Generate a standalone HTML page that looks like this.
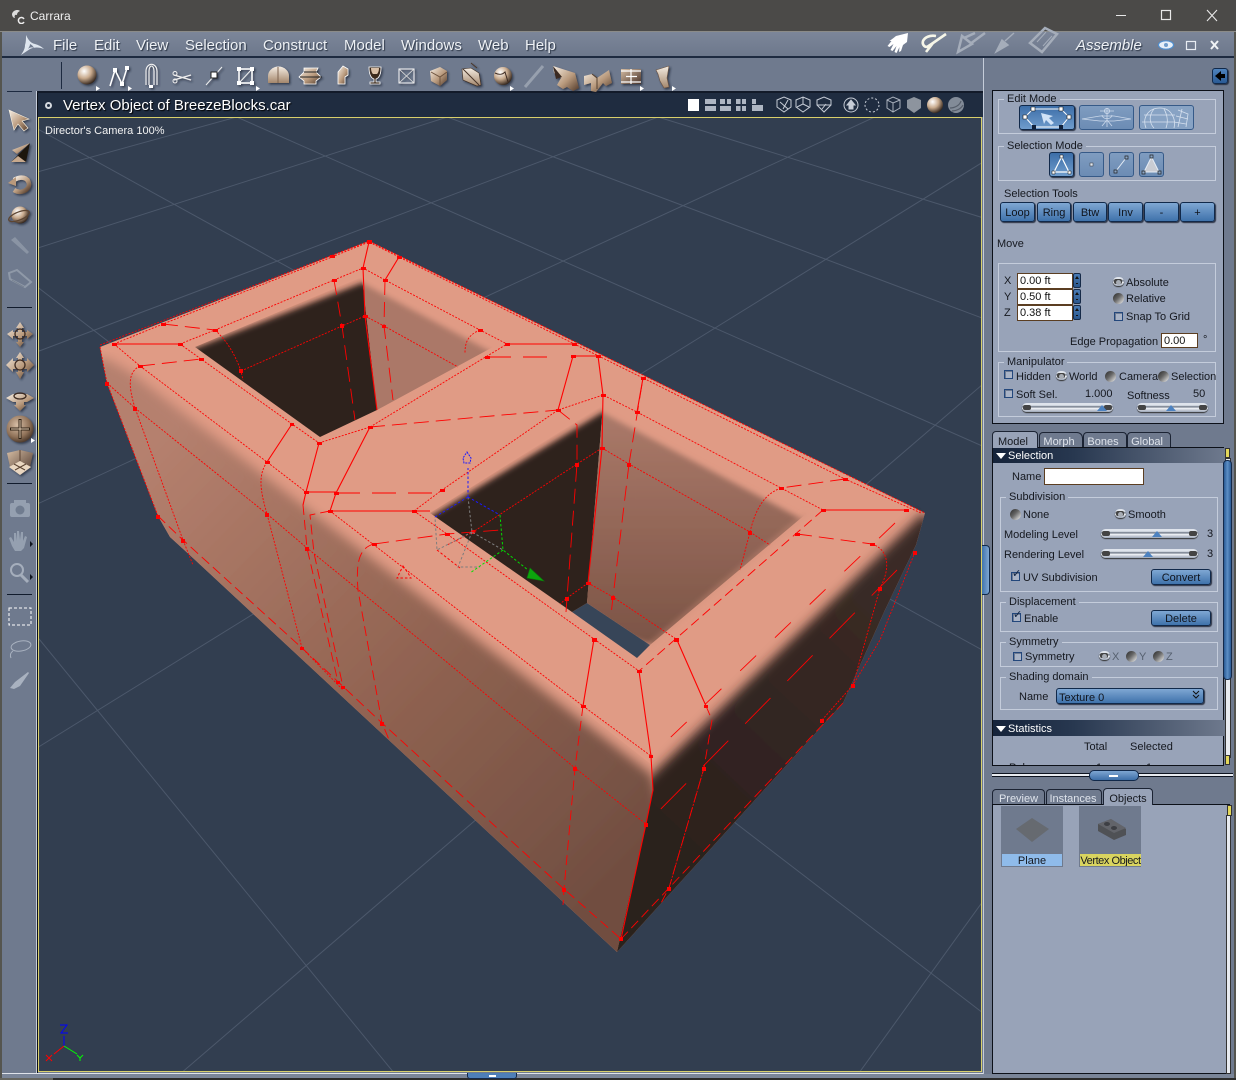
<!DOCTYPE html>
<html><head><meta charset="utf-8"><title>Carrara</title>
<style>
html,body{margin:0;padding:0;width:1236px;height:1080px;overflow:hidden;background:#6f7a8e}
*{box-sizing:border-box}
.a{position:absolute}
.t{position:absolute;margin-top:1px;font:11px/14px "Liberation Sans",sans-serif;color:#15181f;white-space:nowrap}
.m{position:absolute;top:37px;font:15px/18px "Liberation Sans",sans-serif;color:#eef1f5;text-shadow:1px 1px 1px #2a3444;white-space:nowrap}
.g{position:absolute;border:1px solid #c4ccdb}
.l{position:absolute;margin-top:1px;font:11px/12px "Liberation Sans",sans-serif;color:#15181f;background:#98a3b8;padding:0 3px;white-space:nowrap}
.b{position:absolute;padding-top:1px;background:linear-gradient(#7fa7d3,#3f72ab);border:1px solid #11294a;border-radius:3px;box-shadow:1px 1px 1px #2a3142;font:11px/16px "Liberation Sans",sans-serif;color:#10151e;text-align:center}
.b svg{margin-top:-1px}
.r{position:absolute;width:11px;height:11px;border-radius:50%;background:linear-gradient(135deg,#2a2a2a,#666 45%,#f4f4f4)}
.r.s:after{content:"";position:absolute;left:3px;top:3px;width:5px;height:5px;border-radius:50%;background:#a8adb5}
.c{position:absolute;width:9px;height:9px;border:1px solid #23477c;background:#a9b3c6;box-shadow:inset 1px 1px 0 #6e7b92}
.c.k:after{content:"✓";position:absolute;left:0;top:-5px;font:bold 11px/12px "DejaVu Sans",sans-serif;color:#10233f}
.i{position:absolute;background:#fff;border:1px solid #5b3e22;font:11px/15px "Liberation Sans",sans-serif;color:#111;padding-left:2px;white-space:nowrap;overflow:hidden}
.s{position:absolute;height:9px;border-radius:5px;background:linear-gradient(#dfe4ec 0 25%,#5e6878 45%,#f6f8fb 55%,#9ca6b7 100%);box-shadow:0 1px 1px #333}
.s:before,.s:after{content:"";position:absolute;top:2px;width:8px;height:5px;background:#444;border-radius:2px}
.s:before{left:1px}.s:after{right:1px}
.h{position:absolute;top:2px;width:0;height:0;border-left:5px solid transparent;border-right:5px solid transparent;border-bottom:6px solid #4d82c0;z-index:1}
.tab{position:absolute;background:#6f7a8e;border:1px solid #1b2333;border-bottom:0;border-radius:4px 4px 0 0;font:11px/18px "Liberation Sans",sans-serif;color:#dfe4ec;text-align:center;padding-right:4px}
.tab.on{background:#98a3b8;color:#15181f;line-height:20px}
.e{position:absolute;border:1px solid #365a88;border-radius:3px;background:linear-gradient(#7f9cc0,#6c8cb4)}
.sp{position:absolute;width:8px;height:15px;background:linear-gradient(#4a7bb5,#2a568c);border:1px solid #162a48;border-radius:2px}
.sp:after{content:"";position:absolute;left:1px;top:2px;width:0;height:0;border-left:2px solid transparent;border-right:2px solid transparent;border-bottom:3px solid #111;box-shadow:0 6px 0 -1px #111}
</style></head><body>

<div class="a" style="left:0;top:0;width:1236px;height:31px;background:#4b4a48"></div>
<div class="a" style="left:0;top:31px;width:1236px;height:1px;background:#8b8b88"></div>
<div class="a" style="left:0;top:32px;width:2px;height:1048px;background:#55554f"></div>
<div class="a" style="right:0;top:32px;width:2px;height:1048px;background:#55554f"></div>
<div class="t" style="left:30px;top:8px;font-size:12px;color:#f0f0f0">Carrara</div>
<svg class="a" style="left:10px;top:8px" width="16" height="16" viewBox="0 0 16 16"><path d="M2 6C3 2 8 1 10 3 8 4 7 5 7 7 5 6 4 8 5 10 3 10 2 8 2 6z" fill="#ddd"/><path d="M14 11a3 3 0 1 0 0 3" fill="none" stroke="#eee" stroke-width="1.5"/></svg>
<svg class="a" style="left:1110px;top:8px" width="116" height="16"><path d="M6 7.5h10" stroke="#e8e8e8"/><rect x="51.5" y="2.5" width="9" height="9" fill="none" stroke="#e8e8e8" stroke-width="1.2"/><path d="M97 2l10 11M107 2L97 13" stroke="#e8e8e8" stroke-width="1.1"/></svg>

<!-- menu -->
<div class="a" style="left:2px;top:32px;width:1232px;height:24px;background:linear-gradient(#7c8699,#6d788c)"></div>
<div class="a" style="left:2px;top:56px;width:1232px;height:2px;background:#1d2a40"></div>
<div class="a" style="left:2px;top:58px;width:1232px;height:33px;background:#6f7a8e"></div>
<div class="m" style="left:53px">File</div><div class="m" style="left:94px">Edit</div><div class="m" style="left:136px">View</div><div class="m" style="left:185px">Selection</div><div class="m" style="left:263px">Construct</div><div class="m" style="left:344px">Model</div><div class="m" style="left:401px">Windows</div><div class="m" style="left:478px">Web</div><div class="m" style="left:525px">Help</div>
<div class="m" style="left:1076px;font-style:italic">Assemble</div>
<div class="a" style="left:61px;top:62px;width:1px;height:27px;background:#1d2a40"></div>
<div class="a" style="left:983px;top:58px;width:1px;height:1020px;background:#c5ccd9"></div>
<div class="a" style="left:7px;top:91px;width:25px;height:1px;background:#1d2a40"></div>

<!-- left rail edges -->
<div class="a" style="left:36px;top:91px;width:1px;height:982px;background:#c5ccd9"></div>

<!-- viewport -->
<div class="a" style="left:37px;top:91px;width:946px;height:2px;background:#121a29"></div>
<div class="a" style="left:37px;top:93px;width:946px;height:24px;background:#1f2c40"></div>
<div class="a" style="left:37px;top:93px;width:1px;height:980px;background:#0c1018"></div>
<div class="a" style="left:45px;top:102px;width:7px;height:7px;border:2px solid #d5d9df;border-radius:50%"></div>
<div class="t" style="left:63px;top:96px;font-size:15px;line-height:18px;color:#fff;text-shadow:1px 1px 1px #000">Vertex Object of BreezeBlocks.car</div>

<svg class="a" style="left:0;top:0" width="1236" height="1080" viewBox="0 0 1236 1080">
<defs>
<linearGradient id="fw" gradientUnits="userSpaceOnUse" x1="160" y1="440" x2="610" y2="880"><stop offset="0" stop-color="#b5806e"/><stop offset=".5" stop-color="#936553"/><stop offset="1" stop-color="#714e41"/></linearGradient>
<linearGradient id="rw" gradientUnits="userSpaceOnUse" x1="903" y1="560" x2="640" y2="840"><stop offset="0" stop-color="#3b2b26"/><stop offset="1" stop-color="#2b201d"/></linearGradient>
<linearGradient id="w2" gradientUnits="userSpaceOnUse" x1="650" y1="420" x2="650" y2="650"><stop offset="0" stop-color="#a97868"/><stop offset="1" stop-color="#7a5345"/></linearGradient>
<filter id="b5" x="-20%" y="-20%" width="140%" height="140%"><feGaussianBlur stdDeviation="5.5"/></filter>
<filter id="b3" x="-20%" y="-20%" width="140%" height="140%"><feGaussianBlur stdDeviation="3"/></filter>
<clipPath id="cF"><path d="M100 350L107 383 158 516 170 537 193 558 617 952 646 824 653 790 652 765 130 355z"/></clipPath>
<clipPath id="cR"><path d="M925 513L916 545 885 610 843 703 617 952 646 824 653 790 652 745 905 490z"/></clipPath>
<clipPath id="dW1"><path d="M195 347L362 277 377 410 320 437z"/></clipPath>
<clipPath id="rW1"><path d="M362 277L493 347 377 410z"/></clipPath>
<clipPath id="dW2"><path d="M430 513L603 405 587 603 572 612z"/></clipPath>
<clipPath id="rW2"><path d="M603 405L807 513 650 645 587 603z"/></clipPath>
<clipPath id="cVP"><rect x="39" y="118" width="942" height="953"/></clipPath>
</defs>
<rect x="38.5" y="117.5" width="943" height="954" fill="#323e50" stroke="#d8cf6a"/>
<g clip-path="url(#cVP)"><g transform="translate(38 117) scale(.602 .609)" stroke="#4c586b" fill="none">
<path vector-effect="non-scaling-stroke" d="M0 215L680 0M0 90L330 0M1030 0L0 385M1390 0L0 635M1568 75L0 1035M1568 440L240 1568M1568 1290L1365 1568M330 0L1568 540M1030 0L1568 165M680 0L1568 330M0 20L1568 875M0 280L1568 1470M0 855L590 1568"/>
</g></g>
<!-- body -->
<path d="M100 347L369 241 925 513 916 545 885 610 843 703 617 952 193 558 170 537 158 516 107 383z" fill="#e09b85"/>
<g clip-path="url(#cF)"><path d="M60 370L105 358 130 372 652 775 720 1010 100 800z" fill="url(#fw)" filter="url(#b5)"/></g>
<g clip-path="url(#cR)"><path d="M652 775L923 513 975 560 640 1010 550 1000 590 835z" fill="url(#rw)" filter="url(#b5)"/></g>
<!-- hole 1 -->
<path d="M195 347L362 277 493 347 320 437z" fill="#e09b85"/>
<g clip-path="url(#dW1)"><path d="M170 358L362 283 420 300 400 450 300 460z" fill="#2e211f" filter="url(#b3)"/></g>
<g clip-path="url(#rW1)"><path d="M340 270L362 283 493 353 400 430 340 420z" fill="#ab7867" filter="url(#b3)"/></g>
<!-- hole 2 -->
<path d="M430 513L603 405 807 513 637 658 572 612z" fill="#e09b85"/>
<path d="M587 603L650 645 637 658 572 612z" fill="#374558"/>
<g clip-path="url(#dW2)"><path d="M400 535L603 412 650 420 620 640 540 640z" fill="#2d201d" filter="url(#b3)"/></g>
<g clip-path="url(#rW2)"><path d="M570 395L603 413 807 522 700 660 570 620z" fill="url(#w2)" filter="url(#b3)"/></g>
<path d="M807 513L650 645" stroke="#d0917c" stroke-width="2" filter="url(#b3)"/>
<!-- wire: solid -->
<g fill="none" stroke="#f00" stroke-width="1.1">
<path d="M114 344H180M363 268L369 242M363 268L365 316 377 410M399 257L385 280M507 344H574M573 356H598M573 356L558 410M598 356L603 395M643 378L637 412M603 395L602 448 588 583M292 424L267 462M319 443L306 492 303 505M370 427L336 493 330 511M306 492H336M330 511H430M594 639L583 706M639 671L651 756 653 790 646 824 621 939M677 640L706 706M823 510H906"/>
</g>
<!-- wire: dotted -->
<g fill="none" stroke="#f00" stroke-width=".9" stroke-dasharray="2 1.4">
<path d="M100 345L369 241 925 513M114 344L163 324 332 257 369 242 399 257 643 378 845 479 921 513M180 344L215 330 334 280 363 268 385 280 480 330 507 344M241 371L342 326 365 316 384 326 458 367M215 330C226 340 234 352 241 371L243 380M480 330C468 335 465 342 465 353M370 427L507 344M319 443L370 427M114 344L140 366 267 462 306 492M180 344L292 424 319 443M330 511L497 640 583 706 651 756M414 511L447 534 594 639 639 671M107 383L135 408 267 514 307 548 420 640 575 768 646 824M414 511L442 490 558 410 603 395 637 412 781 488 823 510M602 448L629 464 750 532 770 545M602 448L577 464 473 532 447 545M588 583L613 597 676 639M588 583L567 598 560 604M100 347L107 383 158 516M140 366C128 372 128 385 135 408L183 540 193 565M267 462C258 475 260 490 267 514L302 648 343 690M781 488C762 495 755 512 750 532L740 570M872 544C890 550 890 570 880 588L853 685 822 720M915 552L880 640 853 685M704 768L669 888"/>
</g>
<!-- wire: dashed -->
<g fill="none" stroke="#f00" stroke-width=".9">
<path stroke-dasharray="15 7" d="M163 324L215 330M140 366L201 359M385 280L384 326 393 400M334 280L342 326 355 420M370 427L558 410M558 410L577 425 577 464 567 598 566 612M629 464L643 378M629 464L613 597 611 615M845 479L781 488M797 534L872 544M374 544L447 534 500 530"/>
<path stroke-dasharray="24 12" stroke-width="1.1" d="M336 493H442M487 357H550"/>
<path stroke-dasharray="10 5" d="M158 516L183 540 302 648 382 723 564 889 621 939M303 505L307 548 338 682M330 511L310 515 314 553 343 687M374 544C358 548 356 565 358 590L382 723 390 742M706 706L712 720 704 768 669 888 660 905M583 706L575 768 564 889 563 905M823 510L639 671M621 939L843 703"/>
<path stroke-dasharray="22 26" d="M895 523L651 756"/>
<path stroke-dasharray="36 24" d="M897 570L646 824"/>
</g>
<!-- vertices -->
<path fill="#f00" d="M112 343h5v3h-5zM161 323h5v3h-5zM330 255h5v3h-5zM367 240h5v4h-5zM397 256h5v3h-5zM178 343h5v3h-5zM213 329h5v3h-5zM332 279h5v3h-5zM361 267h5v3h-5zM383 279h5v3h-5zM239 369h4v4h-4zM340 324h4v4h-4zM363 315h5v3h-5zM382 325h4v3h-4zM478 329h5v3h-5zM505 343h5v3h-5zM572 343h5v3h-5zM571 355h5v3h-5zM596 355h5v3h-5zM485 356h5v3h-5zM641 377h5v3h-5zM601 394h5v3h-5zM635 411h5v3h-5zM556 409h5v3h-5zM600 447h5v3h-5zM627 463h4v4h-4zM575 463h4v4h-4zM586 582h5v3h-5zM611 596h4v4h-4zM565 597h4v4h-4zM592 638h5v4h-5zM674 638h5v4h-5zM637 670h5v3h-5zM779 487h5v3h-5zM843 478h5v3h-5zM821 509h5v3h-5zM904 509h5v3h-5zM795 533h5v3h-5zM870 543h5v3h-5zM748 531h4v4h-4zM878 587h4v4h-4zM913 551h4v4h-4zM851 684h4v4h-4zM440 489h5v3h-5zM445 533h5v3h-5zM471 530h4v4h-4zM581 705h5v3h-5zM573 767h4v4h-4zM562 888h4v4h-4zM619 937h4v4h-4zM649 755h4v3h-4zM644 823h4v4h-4zM704 705h4v3h-4zM702 767h4v4h-4zM667 887h4v4h-4zM820 719h4v4h-4zM380 722h4v4h-4zM336 681h4v3h-4zM341 686h4v3h-4zM300 647h4v3h-4zM138 365h5v3h-5zM199 358h5v3h-5zM105 382h4v4h-4zM133 407h4v4h-4zM156 515h4v4h-4zM181 539h4v4h-4zM265 461h5v3h-5zM290 423h4v3h-4zM317 442h5v3h-5zM368 426h5v3h-5zM304 491h5v3h-5zM334 492h5v3h-5zM328 510h5v3h-5zM412 510h5v3h-5zM372 543h5v3h-5zM265 513h4v4h-4zM305 547h4v4h-4z"/>
<!-- gizmo -->
<g fill="none" stroke-width="1" stroke-dasharray="2.500 2">
<path stroke="#7d7d7d" d="M468 497L472 532 503 550M472 532L437 550 435 517M472 532L458 567H480"/>
<path stroke="#1a1aff" d="M468 497V468M468 497L500 515M468 497L435 517"/>
<path stroke="#00e000" d="M500 515L503 550 528 570M503 550L470 573"/>
<path stroke="#f00" d="M437 550L460 568M403 566l5 7 3 5h-14z"/>
</g>
<path d="M467 452l4 6-1 5-6 0-1-5z" fill="none" stroke="#1a1aff" stroke-width="1" stroke-dasharray="2 1"/>
<path d="M530 568l14 13-17-3z" fill="#0da50d" stroke="#0a7a0a" stroke-width=".6"/>
<!-- axis -->
<g fill="none" stroke-width="1">
<path stroke="#00f" d="M64 1046V1036M60 1025h7l-6 8h7"/>
<path stroke="#f00" d="M64 1046L54 1054M46 1055l6 6M52 1055l-6 6"/>
<path stroke="#0f0" d="M64 1046L77 1054M77 1055l3 3 3-3M80 1058v3"/>
</g>

<!-- toolbar icons -->
<defs>
<radialGradient id="sph" cx=".35" cy=".3" r=".75"><stop offset="0" stop-color="#fff"/><stop offset=".5" stop-color="#c9ab8e"/><stop offset="1" stop-color="#2d2018"/></radialGradient>
<radialGradient id="sph2" cx=".4" cy=".35" r=".75"><stop offset="0" stop-color="#d8bfa6"/><stop offset=".6" stop-color="#8f7158"/><stop offset="1" stop-color="#33251b"/></radialGradient>
<linearGradient id="tan" x1="0" y1="0" x2="1" y2="1"><stop offset="0" stop-color="#f7efe5"/><stop offset=".55" stop-color="#b99a7d"/><stop offset="1" stop-color="#50392a"/></linearGradient>
<linearGradient id="dk" x1="0" y1="0" x2="1" y2="1"><stop offset="0" stop-color="#d7bea4"/><stop offset="1" stop-color="#48332a"/></linearGradient>
<linearGradient id="ln" x1="0" y1="0" x2="0" y2="1"><stop offset="0" stop-color="#f4ece2"/><stop offset="1" stop-color="#a4876c"/></linearGradient>
<filter id="ds" x="-30%" y="-30%" width="170%" height="170%"><feDropShadow dx="1.5" dy="1.5" stdDeviation="1" flood-color="#1c2433" flood-opacity=".7"/></filter>
</defs>
<g filter="url(#ds)">
<circle cx="87" cy="75" r="9.5" fill="url(#sph)"/>
<path d="M110 86L115 70 122 84 127 68" fill="none" stroke="#fff" stroke-width="1.5"/><path d="M113 68h4v4h-4zM125 66h4v4h-4zM120 82h4v4h-4z" fill="#fff"/>
<path d="M146 85V71a4.500 5.500 0 0 1 11 0V85M149 85V71a1.500 3 0 0 1 5 0V85" fill="none" stroke="#f2f2f2" stroke-width="1.100"/><rect x="149" y="85" width="4" height="3" fill="#fff"/>
<path d="M174 75l17 5M174 80l17-5" stroke="#eee" stroke-width="1.400"/><circle cx="175" cy="73.500" r="2" fill="none" stroke="#eee"/><circle cx="175" cy="81" r="2" fill="none" stroke="#eee"/>
<path d="M206 85L222 67" stroke="#eee"/><rect x="211" y="72" width="6" height="6" fill="#fff" stroke="#222"/>
<rect x="239" y="69" width="13" height="14" fill="none" stroke="#fff" stroke-width="1.500"/><path d="M239 83L252 69" stroke="#eee"/><path d="M237 67h4v4h-4zM250 67h4v4h-4zM237 81h4v4h-4zM250 81h4v4h-4z" fill="#fff"/>
<path d="M268 83V76a10 9 0 0 1 21 0V83z" fill="url(#ln)"/><path d="M278 67v16" stroke="#7d6450"/>
<path d="M304 68h14l-2 4 5 5-5 4v3h-12v-3l-5-4 5-5z" fill="url(#tan)" stroke="#fff" stroke-width=".8"/><path d="M300 77h22M304 72h14" stroke="#222" stroke-width="1"/>
<path d="M338 84V72l5-6 5 3v6l-3 2v7z" fill="url(#tan)" stroke="#fff" stroke-width=".8"/>
<path d="M369 67h12c0 8-2 11-5 12v3h4v2h-10v-2h4v-3c-3-1-5-4-5-12z" fill="#3b2a1f" stroke="#fff" stroke-width=".8"/><path d="M371 68h8c0 3-1 5-2 6h-4c-1-1-2-3-2-6z" fill="#d8bfa6"/>
<rect x="399" y="69" width="15" height="14" fill="none" stroke="#fff"/><path d="M399 69l15 14M414 69L399 83" stroke="#ddd" stroke-width=".8"/>
<path d="M430 71l10-4 7 4v9l-7 6-9-5z" fill="url(#tan)"/><path d="M431 72l9 5 7-5M440 77v9" fill="none" stroke="#6d523e"/>
<path d="M462 69l9-1 8 5 2 12-4 1-14-6z" fill="url(#ln)" stroke="#3f2e22" stroke-width=".6"/><path d="M463 69l16 16M471 63l6 5" stroke="#4a3629" fill="none"/>
<circle cx="503" cy="76" r="9" fill="url(#sph)"/><path d="M495 73c4 2 7 2 10-1l3 10" stroke="#3d2b20" fill="none"/>
</g>
<path d="M525 87L543 66" stroke="#97a0ae" stroke-width="3"/>
<g filter="url(#ds)">
<path d="M553 66l22 7 4 15-6 3-6-4-4 2-6-4 4-7-7-5z" fill="url(#tan)"/><path d="M553 66l9 11-6 2z" fill="#3a2a20"/>
<path d="M584 76l8-2 5 4 12-8 3 13-6 3-3-3-7 9-5-1v-8l-7 2z" fill="url(#tan)"/><path d="M592 74l5 4v11" stroke="#54402f" fill="none"/>
<rect x="621" y="69" width="20" height="15" fill="url(#dk)"/><path d="M621 71h20M621 82h20M626 76.500h11M631 69v15" stroke="#fff" stroke-width="1.200" fill="none"/>
<path d="M656 70l13-4-2 12 2 9-5 1-4-7-2-7z" fill="url(#ln)" stroke="#6c5443" stroke-width=".6"/>
</g>
<g fill="#fff"><path d="M96 86l4 2.500-4 2.500zM128 86l4 2.500-4 2.500zM256 86l4 2.500-4 2.500zM510 86l4 2.500-4 2.500zM640 86l4 2.500-4 2.500zM672 86l4 2.500-4 2.500z"/></g>
<!-- top right icons -->
<path d="M896 36l12-3-1 9-4 3-2 6-2 1 .500-5-3 6-2-1 2-6-4 5-2-1 3-6-4 3-2-1 4-5-2 0 4-3z" fill="#fff"/>
<path d="M936 36c-6-1-11 1-13 5-1 3 1 6 4 6l6-4 13-9M926 52l4-5 3-4" fill="none" stroke="#f6f6e8" stroke-width="2.600"/>
<path d="M958 52L962 36 972 44zM970 44l15-11M964 38l11-5" fill="none" stroke="#a5adba" stroke-width="2.500"/>
<path d="M996 52l6-12 6 5zM1005 41l9-8" fill="#a5adba" stroke="#a5adba" stroke-width="1.500"/>
<path d="M1030 43l12 9 15-18-12-6z" fill="none" stroke="#a5adba" stroke-width="2.500"/><path d="M1037 42l9-10M1043 46l9-10" stroke="#a5adba" stroke-width="1"/>
<ellipse cx="1166" cy="45" rx="7.500" ry="4.200" fill="#e6eff9" stroke="#4f8fd0" stroke-width="1.200"/><circle cx="1166" cy="45" r="2" fill="#6f9ccc"/>
<rect x="1186.500" y="41.500" width="9" height="8" fill="none" stroke="#e8ecf2" stroke-width="1.200"/>
<path d="M1211 41l7 8M1218 41l-7 8" stroke="#f0f3f6" stroke-width="2"/>
<!-- view icons -->
<rect x="688" y="99" width="11" height="12" fill="#fff"/><path fill="#aeb6c3" d="M705 99h11v5h-11zM705 106h11v5h-11zM720 99h5v5h-5zM727 99h4v5h-4zM720 106h11v5h-11zM736 99h4.500v5h-4.500zM742 99h4v5h-4zM736 106h4.500v5h-4.500zM742 106h4v5h-4zM752 99h4v5h-4zM752 105h11v6h-11z"/>
<g fill="none" stroke="#c6ccd6" stroke-width="1"><path d="M777 100l7-3 7 3v7l-7 5-7-5zM780 102l8 7M788 100l-5 9"/><path d="M796 100l7-3 7 3v7l-7 5-7-5zM803 97v7l-6 3M803 104l6 3"/><path d="M817 100l7-3 7 3v5l-7 7-7-7zM817 105l14 0M822 109l4-5"/><circle cx="851" cy="105" r="7"/><path d="M851 100l4 5h-2v4h-4v-4h-2z" fill="#c6ccd6"/><circle cx="872" cy="105" r="7" stroke-dasharray="2 2"/><path d="M887 100l6-3 7 3v8l-7 4-6-4zM887 100l6 3 7-3M893 103v9" stroke="#aab1bd"/></g>
<path d="M907 100l7-3 7 3v8l-7 5-7-5z" fill="#8d949e"/>
<ellipse cx="935" cy="105" rx="8" ry="8" fill="url(#sph)"/>
<circle cx="956" cy="105" r="8" fill="#828b98"/><path d="M950 108c5 0 10-3 11-7M952 111c4 0 9-2 11-6" stroke="#555d6a" stroke-width="1.200" fill="none"/>

<!-- left tools -->
<g filter="url(#ds)">
<path d="M9 110l20 9-7 2 6 7-4 3-6-7-4 6z" fill="url(#tan)" stroke="#f8f0e0" stroke-width=".6"/>
<path d="M11 162l19-19-4 19-7-1z" fill="#1a1410"/><path d="M30 143l-18 7 5 4z" fill="url(#tan)"/><path d="M18 156l-7 6 15 0z" fill="#c7a98d"/>
<path d="M14 180c7-4 14-3 15 4 0 7-9 10-15 6" fill="none" stroke="url(#tan)" stroke-width="4.500"/><path d="M8 183l8-6 0 9z" fill="#b9997c"/>
<circle cx="20" cy="215" r="8.500" fill="url(#sph)"/><ellipse cx="19" cy="216" rx="11" ry="4" fill="none" stroke="#5b4433" stroke-width="1.300" transform="rotate(-22 19 216)"/>
<path d="M20 322l4 6h-2v4h5v-2l6 4-6 5v-3h-5v6h2l-4 5-4-5h2v-6h-5v3l-6-5 6-4v2h5v-4h-2z" fill="url(#tan)"/><circle cx="20" cy="334" r="5" fill="none" stroke="#3d2c20" stroke-width="1.300"/>
<path d="M20 352l4 6h-2v3h5v-3l7 7-7 7v-3h-5v3h2l-4 7-4-7h2v-3h-5v3l-7-7 7-7v3h5v-3h-2z" fill="url(#tan)"/><circle cx="20" cy="365" r="5" fill="none" stroke="#3d2c20" stroke-width="1.300"/>
<path d="M6 398l7-4h14l7 4-7 4h-3v3h2l-6 6-6-6h2v-3h-3z" fill="url(#tan)"/><ellipse cx="20" cy="396" rx="6" ry="3" fill="none" stroke="#3d2c20" stroke-width="1.300"/>
<circle cx="20" cy="429" r="13.500" fill="url(#sph2)"/><path d="M20 419v20M10 429h20" stroke="#2e2018" stroke-width="3"/><path d="M20 420v18M11 429h18" stroke="#e4ccb3" stroke-width="1"/>
<path d="M7 453l13-3 13 3-3 14-10 8-10-8z" fill="url(#dk)"/><path d="M9 467l11-6 11 6-11 8z" fill="#ead7c1"/><path d="M20 450v11M14 464l11 6M26 464l-11 6" stroke="#5a4332"/>
</g>
<g fill="#95a0b0">
<rect x="10" y="503" width="20" height="14" rx="2"/><rect x="14" y="500" width="12" height="4"/><circle cx="20" cy="510" r="4.500" fill="#707c8f"/>
<path d="M12 546l-3-8 2-1 3 5V533h2l1 8V531h2l1 9 1-8h2l0 9 2-5 2 1-3 11-3 3h-6z"/>
</g>
<circle cx="17" cy="570" r="6" fill="none" stroke="#a5aebc" stroke-width="2"/><path d="M21 575l7 7" stroke="#a5aebc" stroke-width="3"/>
<path d="M30 541l3 3-3 3zM30 574l3 3-3 3z" fill="#10151f"/>
<path d="M31 438l4 2.500-4 2.500z" fill="#fff"/>
<path d="M11 240l4-3 14 15-2 2z" fill="#8a94a4"/>
<path d="M9 273l8-3 14 12-6 5-15-8z" fill="none" stroke="#8f99a8" stroke-width="2"/><path d="M12 280l12 7" stroke="#77818f"/>
<rect x="9" y="608" width="22" height="17" fill="none" stroke="#fff" stroke-dasharray="3 2"/>
<ellipse cx="21" cy="646" rx="10" ry="5" fill="none" stroke="#a9b2c0" stroke-width="1" transform="rotate(-10 21 646)"/><path d="M13 651c-3 2-3 5-2 7" stroke="#a9b2c0" fill="none"/>
<path d="M10 688l5-6 13-10 1 1-9 13-6 3z" fill="#a9b2c0"/>
</svg>
<div class="a" style="left:7px;top:307px;width:25px;height:1px;background:#111b2c"></div>
<div class="a" style="left:7px;top:483px;width:25px;height:1px;background:#111b2c"></div>
<div class="a" style="left:7px;top:594px;width:25px;height:1px;background:#111b2c"></div>
<div class="t" style="left:45px;top:123px;color:#f2f2f2">Director's Camera 100%</div>

<!-- bottom strip -->
<div class="a" style="left:2px;top:1073px;width:981px;height:1px;background:#dfe3ea"></div>
<div class="a" style="left:2px;top:1074px;width:1232px;height:4px;background:#7a8598"></div>
<div class="a" style="left:0;top:1078px;width:1236px;height:2px;background:#2c2c2b"></div>
<div class="a" style="left:0;top:1078px;width:53px;height:2px;background:#66665f"></div>
<div class="a" style="left:467px;top:1073px;width:50px;height:6px;background:#4e7fb8;border:1px solid #14294a;border-top:0;border-radius:0 0 3px 3px"></div>
<div class="a" style="left:489px;top:1075px;width:7px;height:2px;background:#fff"></div>

<!-- right panel -->
<div class="b" style="left:1212px;top:68px;width:16px;height:16px;background:linear-gradient(#4f83bd,#2a5a94)"><svg width="14" height="14" style="display:block"><path d="M2 7l6-5v3h4v4H8v3z" fill="#000"/></svg></div>
<div class="a" style="left:982px;top:545px;width:8px;height:50px;background:linear-gradient(90deg,#3f72ab,#7fa7d3);border:1px solid #122a4a;border-left:0;border-radius:0 4px 4px 0"></div>
<div class="a" style="left:992px;top:90px;width:232px;height:334px;background:#98a3b8;border:1px solid #0c1018"></div>

<div class="g" style="left:998px;top:99px;width:218px;height:35px"></div><div class="l" style="left:1004px;top:92px">Edit Mode</div>
<div class="b" style="left:1019px;top:105px;width:56px;height:25px;background:linear-gradient(#3d6ea8,#6f9ccc)"><svg width="54" height="23" style="display:block"><path d="M5 11L13 3H41L49 11 41 21H14z" fill="none" stroke="#fff"/><path d="M3 9h4v4H3zM11 1h4v4h-4zM39 1h4v4h-4zM47 9h4v4h-4z" fill="#fff" stroke="#111" stroke-width=".6"/><path d="M12 19h4v4h-4zM39 19h4v4h-4z" fill="#10213b"/><path d="M21 7l12 3-4 2 5 5-3 2-5-5-2 4z" fill="#cfe2f7"/></svg></div>
<div class="e" style="left:1079px;top:105px;width:55px;height:25px"><svg width="53" height="23" style="display:block"><path d="M2 13l18-3h14l17 3-17 2H20zM27 2v19M20 5h14M22 20l5-6 5 6M22 9c1 5 9 5 10 0" fill="none" stroke="#cbd8ea" stroke-width=".8"/><circle cx="27" cy="5" r="2.500" fill="none" stroke="#cbd8ea"/></svg></div>
<div class="e" style="left:1139px;top:105px;width:55px;height:25px;background:#88a3c4"><svg width="53" height="23" style="display:block"><path d="M6 22C2 12 8 2 20 2S36 14 34 22M14 3C8 10 10 18 14 22M24 3c4 7 4 14 2 19M4 9H35M2 16H35M38 4l10 4-2 13M42 3l-4 18M36 10l12 3M34 16l12 2" fill="none" stroke="#d6e1ef" stroke-width=".8"/></svg></div>

<div class="g" style="left:998px;top:146px;width:218px;height:35px"></div><div class="l" style="left:1004px;top:139px">Selection Mode</div>
<div class="b" style="left:1049px;top:152px;width:25px;height:25px;background:linear-gradient(#3d6ea8,#6f9ccc)"><svg width="23" height="23" style="display:block"><path d="M11.500 4L4 19h15z" fill="none" stroke="#fff" stroke-width="1.200"/><path d="M10 2h3v3h-3zM2 18h3v3H2zM18 18h3v3h-3z" fill="#fff" stroke="#111" stroke-width=".5"/></svg></div>
<div class="e" style="left:1079px;top:152px;width:25px;height:25px"><svg width="23" height="23" style="display:block"><rect x="10" y="10" width="3" height="3" fill="#dfe8f3" stroke="#333" stroke-width=".5"/></svg></div>
<div class="e" style="left:1109px;top:152px;width:25px;height:25px"><svg width="23" height="23" style="display:block"><path d="M6 18L16 5" stroke="#e6edf6"/><path d="M15 3h3v3h-3zM4 17h3v3H4z" fill="#8ba6c7" stroke="#222" stroke-width=".7"/></svg></div>
<div class="e" style="left:1139px;top:152px;width:25px;height:25px"><svg width="23" height="23" style="display:block"><path d="M11.500 4L4 19h15z" fill="#c9ccd3" stroke="#e6edf6"/><path d="M10 2h3v3h-3zM2 18h3v3H2zM18 18h3v3h-3z" fill="#8ba6c7" stroke="#222" stroke-width=".7"/></svg></div>

<div class="t" style="left:1004px;top:186px">Selection Tools</div>
<div class="b" style="left:1000px;top:202px;width:35px;height:20px;line-height:18px">Loop</div>
<div class="b" style="left:1037px;top:202px;width:34px;height:20px;line-height:18px">Ring</div>
<div class="b" style="left:1073px;top:202px;width:34px;height:20px;line-height:18px">Btw</div>
<div class="b" style="left:1108px;top:202px;width:35px;height:20px;line-height:18px">Inv</div>
<div class="b" style="left:1144px;top:202px;width:35px;height:20px;line-height:18px">-</div>
<div class="b" style="left:1180px;top:202px;width:35px;height:20px;line-height:18px">+</div>
<div class="t" style="left:997px;top:236px">Move</div>

<div class="g" style="left:998px;top:263px;width:218px;height:89px"></div>
<div class="t" style="left:1004px;top:273px">X</div><div class="t" style="left:1004px;top:289px">Y</div><div class="t" style="left:1004px;top:305px">Z</div>
<div class="i" style="left:1017px;top:273px;width:56px;height:16px">0.00 ft</div><div class="sp" style="left:1073px;top:273px"></div>
<div class="i" style="left:1017px;top:289px;width:56px;height:16px">0.50 ft</div><div class="sp" style="left:1073px;top:289px"></div>
<div class="i" style="left:1017px;top:305px;width:56px;height:16px">0.38 ft</div><div class="sp" style="left:1073px;top:305px"></div>
<div class="r s" style="left:1113px;top:277px"></div><div class="t" style="left:1126px;top:275px">Absolute</div>
<div class="r" style="left:1113px;top:293px"></div><div class="t" style="left:1126px;top:291px">Relative</div>
<div class="c" style="left:1114px;top:312px"></div><div class="t" style="left:1126px;top:309px">Snap To Grid</div>
<div class="t" style="left:1070px;top:334px">Edge Propagation</div>
<div class="i" style="left:1161px;top:333px;width:37px;height:15px">0.00</div>
<div class="t" style="left:1203px;top:332px">°</div>

<div class="g" style="left:998px;top:362px;width:218px;height:55px"></div><div class="l" style="left:1004px;top:355px">Manipulator</div>
<div class="c" style="left:1004px;top:370px"></div><div class="t" style="left:1016px;top:369px">Hidden</div>
<div class="r s" style="left:1056px;top:371px"></div><div class="t" style="left:1069px;top:369px">World</div>
<div class="r" style="left:1105px;top:371px"></div><div class="t" style="left:1119px;top:369px">Camera</div>
<div class="r" style="left:1158px;top:371px"></div><div class="t" style="left:1171px;top:369px">Selection</div>
<div class="c" style="left:1004px;top:389px"></div><div class="t" style="left:1016px;top:387px">Soft Sel.</div>
<div class="t" style="left:1085px;top:386px">1.000</div><div class="t" style="left:1127px;top:388px">Softness</div><div class="t" style="left:1193px;top:386px">50</div>
<div class="s" style="left:1022px;top:403px;width:91px"><i class="h" style="left:75px"></i></div>
<div class="s" style="left:1137px;top:403px;width:71px"><i class="h" style="left:29px"></i></div>

<!-- model tabs -->
<div class="tab on" style="left:992px;top:431px;width:46px;height:17px;z-index:2">Model</div>
<div class="tab" style="left:1039px;top:432px;width:44px;height:15px;border-radius:4px 6px 0 0">Morph</div>
<div class="tab" style="left:1083px;top:432px;width:44px;height:15px">Bones</div>
<div class="tab" style="left:1127px;top:432px;width:44px;height:15px">Global</div>
<div class="a" style="left:992px;top:447px;width:232px;height:319px;background:#98a3b8;border:1px solid #0c1018;overflow:hidden"></div>
<div class="a" style="left:993px;top:448px;width:232px;height:15px;background:linear-gradient(90deg,#15233a,#283850 35%,#6e798d)"></div>
<div class="a" style="left:996px;top:453px;width:0;height:0;border-left:5px solid transparent;border-right:5px solid transparent;border-top:6px solid #fff"></div>
<div class="t" style="left:1008px;top:448px;color:#fff">Selection</div>
<div class="t" style="left:1012px;top:469px">Name</div><div class="i" style="left:1044px;top:468px;width:100px;height:17px"></div>
<div class="g" style="left:1000px;top:497px;width:218px;height:95px"></div><div class="l" style="left:1006px;top:490px">Subdivision</div>
<div class="r" style="left:1010px;top:509px"></div><div class="t" style="left:1023px;top:507px">None</div>
<div class="r s" style="left:1115px;top:509px"></div><div class="t" style="left:1128px;top:507px">Smooth</div>
<div class="t" style="left:1004px;top:527px">Modeling Level</div><div class="s" style="left:1101px;top:529px;width:97px"><i class="h" style="left:51px"></i></div><div class="t" style="left:1207px;top:526px">3</div>
<div class="t" style="left:1004px;top:547px">Rendering Level</div><div class="s" style="left:1101px;top:549px;width:97px"><i class="h" style="left:42px"></i></div><div class="t" style="left:1207px;top:546px">3</div>
<div class="c k" style="left:1011px;top:572px"></div><div class="t" style="left:1023px;top:570px">UV Subdivision</div>
<div class="b" style="left:1151px;top:569px;width:60px;height:16px;line-height:14px">Convert</div>
<div class="g" style="left:1000px;top:602px;width:218px;height:30px"></div><div class="l" style="left:1006px;top:595px">Displacement</div>
<div class="c k" style="left:1012px;top:613px"></div><div class="t" style="left:1024px;top:611px">Enable</div>
<div class="b" style="left:1151px;top:610px;width:60px;height:16px;line-height:14px">Delete</div>
<div class="g" style="left:1000px;top:642px;width:218px;height:25px"></div><div class="l" style="left:1006px;top:635px">Symmetry</div>
<div class="c" style="left:1013px;top:652px"></div><div class="t" style="left:1025px;top:649px">Symmetry</div>
<div class="r s" style="left:1099px;top:651px"></div><div class="t" style="left:1112px;top:649px;color:#56606f">X</div>
<div class="r" style="left:1126px;top:651px"></div><div class="t" style="left:1139px;top:649px;color:#56606f">Y</div>
<div class="r" style="left:1153px;top:651px"></div><div class="t" style="left:1166px;top:649px;color:#56606f">Z</div>
<div class="g" style="left:1000px;top:677px;width:218px;height:33px"></div><div class="l" style="left:1006px;top:670px">Shading domain</div>
<div class="t" style="left:1019px;top:689px">Name</div>
<div class="b" style="left:1056px;top:688px;width:148px;height:16px;text-align:left;padding-left:2px;line-height:16px">Texture 0<svg width="8" height="10" style="position:absolute;right:3px;top:2px"><path d="M1 1l3 3 3-3M1 5l3 3 3-3" fill="none" stroke="#111"/></svg></div>
<div class="a" style="left:993px;top:720px;width:232px;height:16px;background:linear-gradient(90deg,#15233a,#283850 35%,#6e798d)"></div>
<div class="a" style="left:996px;top:726px;width:0;height:0;border-left:5px solid transparent;border-right:5px solid transparent;border-top:6px solid #fff"></div>
<div class="t" style="left:1008px;top:721px;color:#fff">Statistics</div>
<div class="t" style="left:1084px;top:739px">Total</div><div class="t" style="left:1130px;top:739px">Selected</div>
<div class="a" style="left:993px;top:760px;width:230px;height:5px;overflow:hidden"><div class="t" style="left:16px;top:0">Polygons</div><div class="t" style="left:103px;top:0">1</div><div class="t" style="left:153px;top:0">1</div></div>
<!-- scroll 1 -->
<div class="a" style="left:1225px;top:458px;width:6px;height:300px;background:#e8ebf0;border:1px solid #333"></div>
<div class="a" style="left:1225px;top:448px;width:5px;height:10px;background:#e3d75a;border:1px solid #333"></div>
<div class="a" style="left:1225px;top:755px;width:5px;height:10px;background:#e3d75a;border:1px solid #333"></div>
<div class="a" style="left:1223px;top:460px;width:9px;height:220px;background:linear-gradient(90deg,#2a5a94,#5d8fc6 50%,#2a5a94);border:1px solid #14294a;border-radius:4px"></div>
<!-- divider -->
<div class="a" style="left:992px;top:773px;width:241px;height:1px;background:#0e1420"></div>
<div class="a" style="left:992px;top:774px;width:241px;height:2px;background:#e8ebf0"></div>
<div class="a" style="left:992px;top:776px;width:241px;height:1px;background:#0e1420"></div>
<div class="a" style="left:1089px;top:770px;width:50px;height:11px;background:linear-gradient(#7ea6d2,#3d6fa8);border:1px solid #11294a;border-radius:5px"></div>
<div class="a" style="left:1109px;top:775px;width:9px;height:2px;background:#fff"></div>
<!-- objects -->
<div class="tab" style="left:992px;top:789px;width:53px;height:16px;padding-right:0">Preview</div>
<div class="tab" style="left:1046px;top:789px;width:56px;height:16px;padding-right:2px">Instances</div>
<div class="tab on" style="left:1103px;top:788px;width:50px;height:17px;z-index:2;padding-right:0">Objects</div>
<div class="a" style="left:992px;top:804px;width:238px;height:270px;background:#98a3b8;border:1px solid #0c1018"></div>
<div class="a" style="left:1226px;top:815px;width:5px;height:259px;background:#e8ebf0;border:1px solid #333"></div>
<div class="a" style="left:1227px;top:805px;width:5px;height:11px;background:#e3d75a;border:1px solid #333"></div>
<div class="a" style="left:1001px;top:806px;width:62px;height:61px;background:#6f7a8e"></div>
<div class="a" style="left:1079px;top:806px;width:62px;height:61px;background:#6f7a8e"></div>
<svg class="a" style="left:1001px;top:806px" width="140" height="50"><path d="M15 23L31 12l17 11-17 13z" fill="#666a70"/><path d="M97 18l13-5 15 10v6l-12 5-16-9z" fill="#4f5155"/><path d="M97 18l16 9 12-5-15-9z" fill="#62646a"/><ellipse cx="106" cy="18" rx="3" ry="2" fill="#3d3f44"/><ellipse cx="113" cy="22" rx="3" ry="2" fill="#3d3f44"/></svg>
<div class="a" style="left:1002px;top:854px;width:60px;height:12px;background:#8fbbea;font:11px/14px 'Liberation Sans',sans-serif;text-align:center;color:#15181f">Plane</div>
<div class="a" style="left:1080px;top:854px;width:61px;height:12px;background:#d9d45f;font:11px/14px 'Liberation Sans',sans-serif;letter-spacing:-.45px;text-align:center;color:#15181f;white-space:nowrap;overflow:hidden">Vertex Object</div>

<!-- logo -->
<svg class="a" style="left:20px;top:33px" width="26" height="24" viewBox="0 0 26 24"><path d="M6 2c2 4 4 8 9 9 3 1 6 2 9 5-5-2-10-2-14 0-3 2-6 4-9 6 2-3 4-6 4-10 1-3 1-6 1-10z" fill="#dfe6ef"/><path d="M10 11c2 1 3 2 4 4-2-1-4-1-6 1 1-2 2-3 2-5z" fill="#6f7a8e"/></svg>
</body></html>
